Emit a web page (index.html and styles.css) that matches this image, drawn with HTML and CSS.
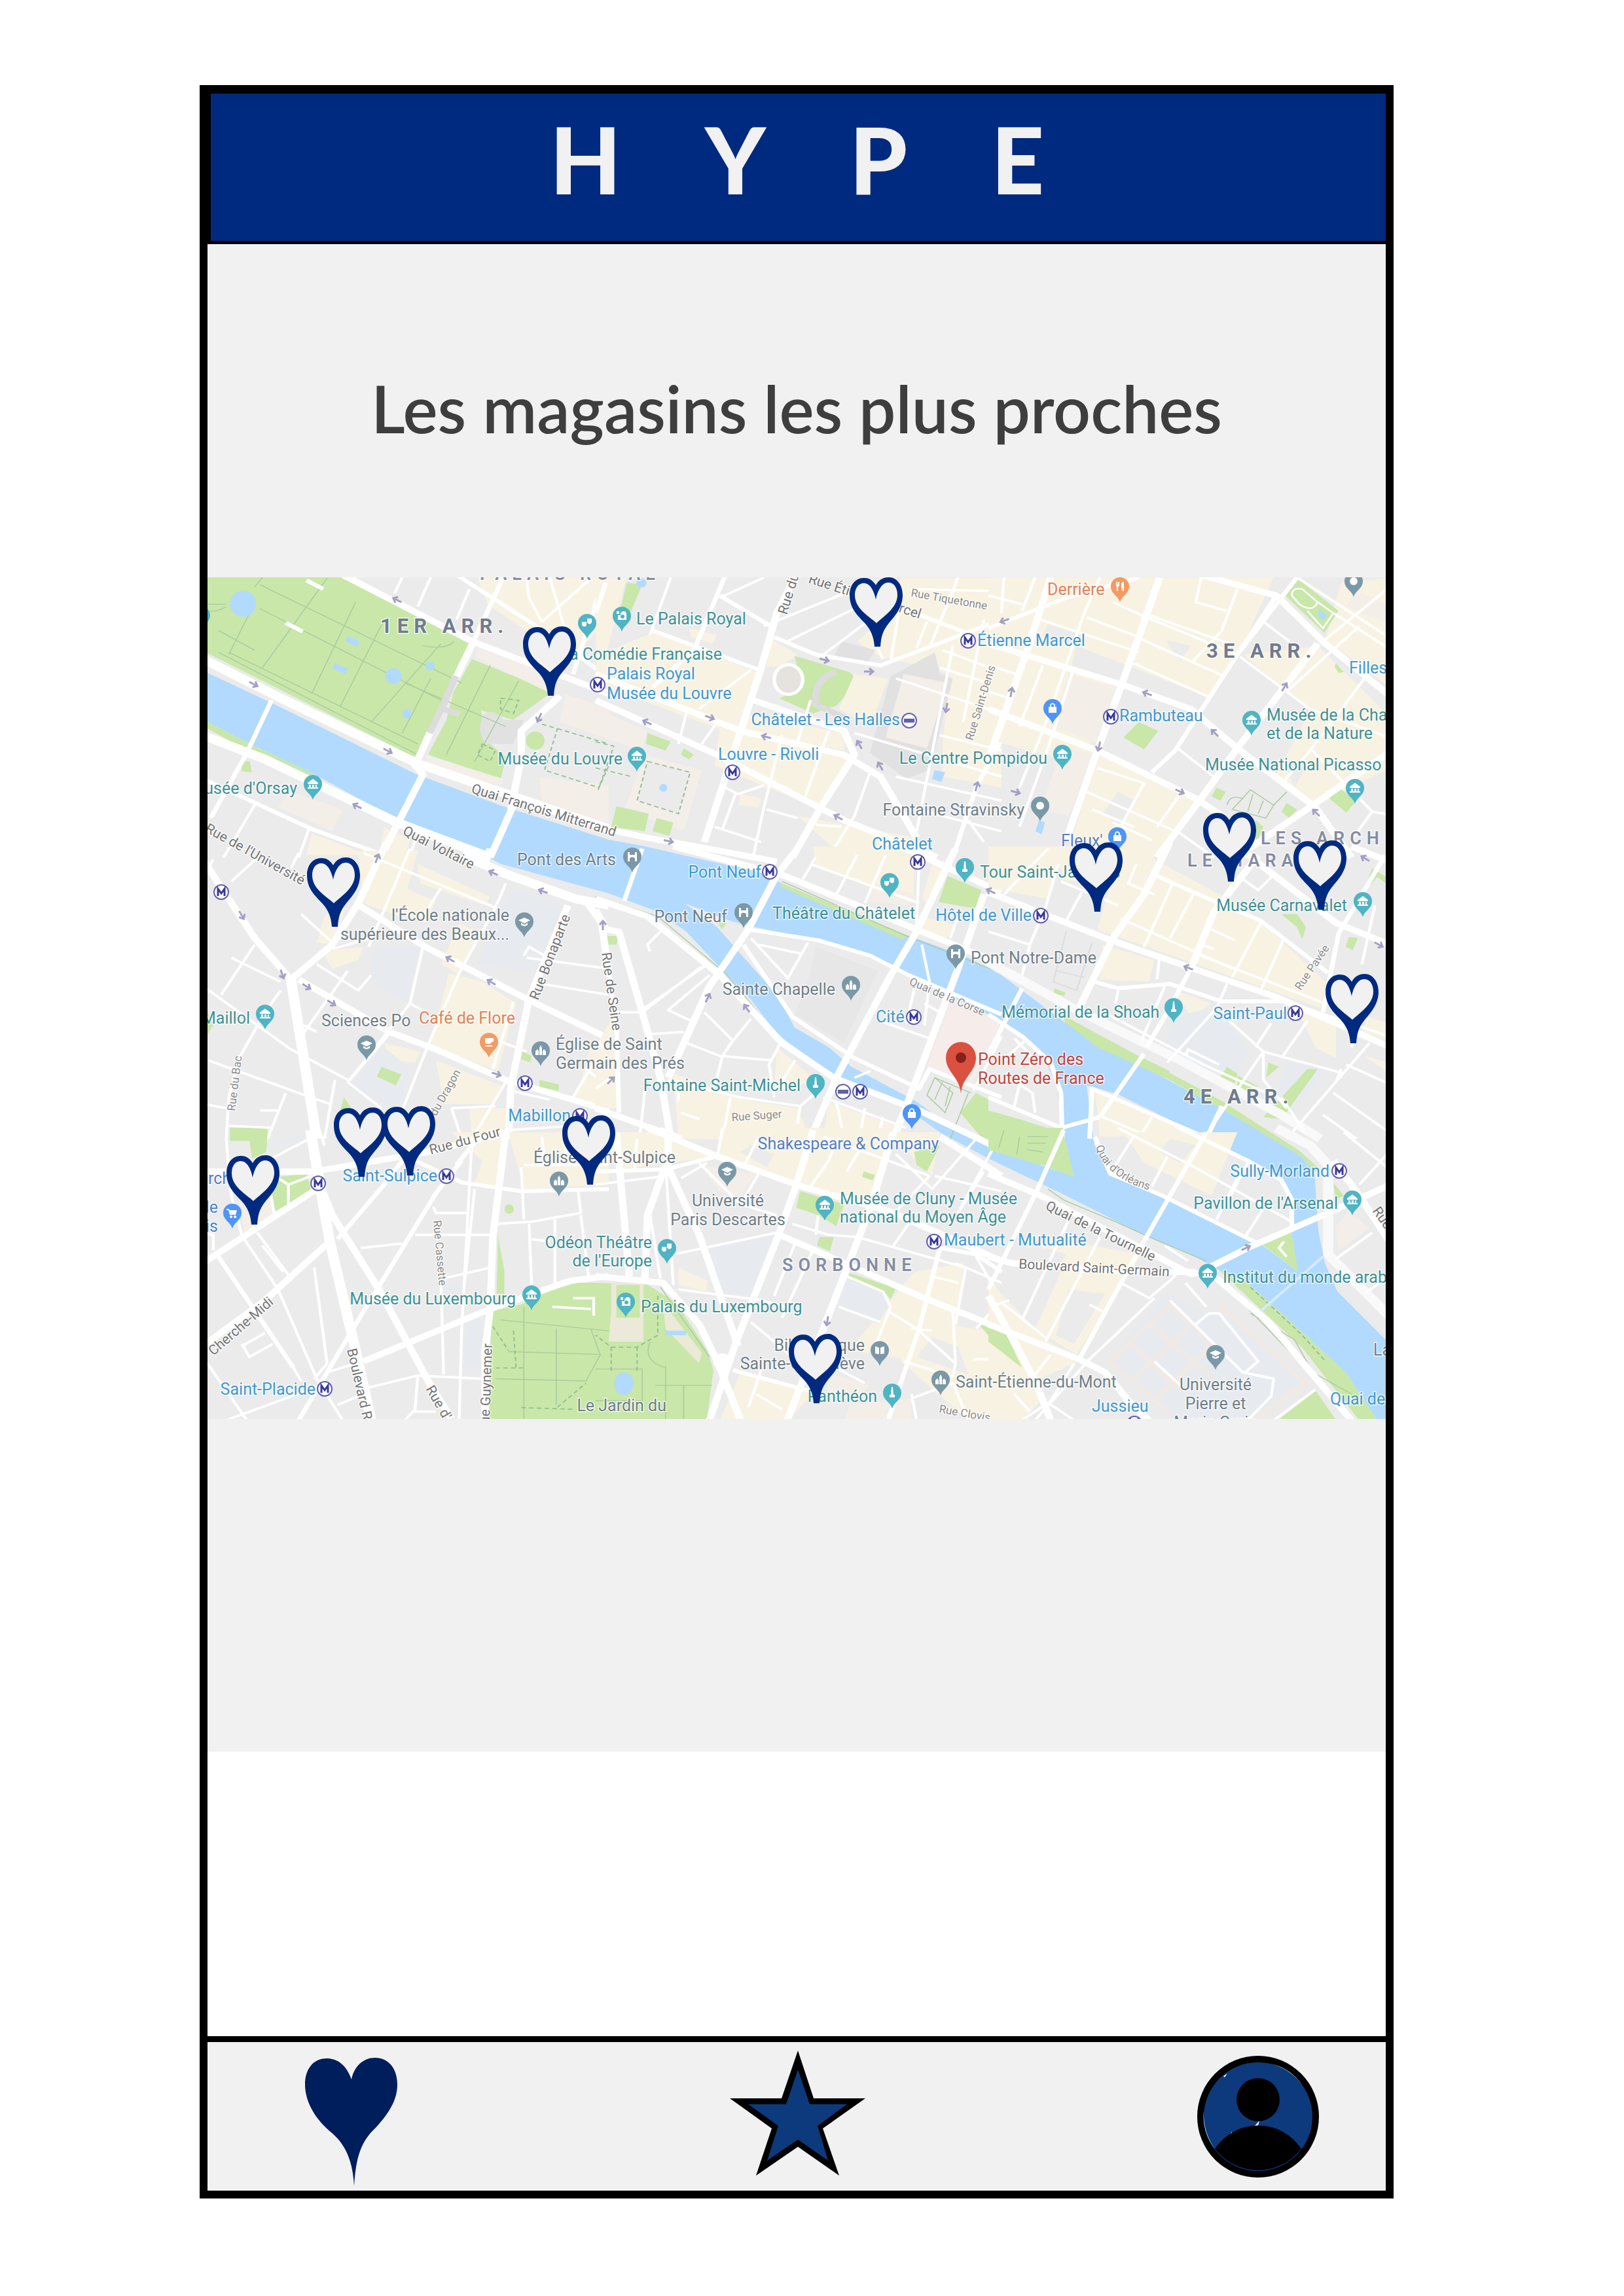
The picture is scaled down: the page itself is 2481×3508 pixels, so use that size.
FILE: index.html
```html
<!DOCTYPE html>
<html lang="fr">
<head>
<meta charset="utf-8">
<meta name="viewport" content="width=device-width, initial-scale=1">
<title>Hype</title>
<link rel="stylesheet" href="styles.css">
</head>
<body>
<div class="phone">
<header class="topbar"><h1 class="brand">HYPE</h1></header>
<main class="content">
<section class="shops">
<h2 class="shops-title">Les magasins les plus proches</h2>
<svg class="map" viewBox="317 882 1800 1286" role="img" aria-label="Plan de Paris">
<defs>
<path id="pin" d="M0 24C-3 14-14 11-14 0A14 14 0 0 1 14 0C14 11 3 14 0 24Z"/>
<g id="museum" class="glyph"><path d="M-8-2L0-8L8-2V0H-8ZM-6 1H-3V5H-6ZM-1 1H2V5H-1ZM4 1H6V5H4ZM-8 5H8V7H-8Z"/></g>
<g id="masks" class="glyph"><path d="M-8-2H-1V3Q-4 8-8 3ZM0-7H7V-1Q4 4 0-1Z"/></g>
<g id="camera" class="glyph"><path d="M-8-7H-4V-3H-8ZM-2-4L1-7H5L7-4V6H-6V-1H-2Z"/><circle class="hole" cx="1" cy="1" r="3"/></g>
<g id="bridge" class="glyph"><path d="M-7-7H-4V-3H4V-7H7V7H4V2Q0-1-4 2V7H-7Z"/></g>
<g id="bag" class="glyph"><path d="M-6-2H6V7H-6ZM-4-2V-5Q0-11 4-5V-2H2V-5Q0-7-2-5V-2Z"/></g>
<g id="cap" class="glyph"><path d="M-9-2L0-6L9-2L0 3ZM-5 2L0 5L5 2V5Q0 9-5 5Z"/></g>
<g id="church" class="glyph"><path d="M-8 7V1L-5-2L-3 1V7ZM-2 7V-4L0-8L2-4V7ZM3 7V1L5-2L8 1V7Z"/></g>
<g id="tower" class="glyph"><path d="M-1-9H1L2 3H4V7H-4V3H-2Z"/></g>
<g id="fork" class="glyph"><path d="M-6-7H-4V-3H-3V-7H-1V-1L-3 1V7H-5V1L-6-1ZM2 7V-4Q3-8 6-7V7H4V1Z"/></g>
<g id="cup" class="glyph"><path d="M-6-6H7V0H4Q3 3 0 3H-3Q-6 3-6 0ZM-6 5H5V7H-6Z"/></g>
<g id="book" class="glyph"><path d="M-7-6L-1-4V6L-7 5ZM7-6L1-4V6L7 5Z"/></g>
<g id="metro"><circle class="badge" r="11"/><path class="badge-m" d="M-5 6V-5L0 2L5-5V6"/></g>
<g id="rer"><circle class="badge" r="11"/><path class="badge-r" d="M-8 0H8"/></g>
<path id="arrow" class="arrow" d="M-7 0H7M1-5L7 0L1 5"/>
<g id="shop">
<path class="shop-edge" d="M40 12C35 4 29 1 22 1C8 1 0 13 0 27C0 48 12 58 24 71C33 81 37 92 38 106H47C48 92 50 82 60 70C70 58 81 46 81 27C81 12 72 0 60 0C52 0 45 3 40 12Z"/>
<path class="shop-fill" d="M40 34C37 20 31 9 22 9C13 9 8 17 8 27C8 48 28 58 41 70C54 58 73 46 73 27C73 15 67 8 59 8C50 8 43 19 40 34Z"/>
</g>
<path id="orleans" d="M1674 1752Q1690 1802 1762 1820"/>
</defs>

<rect class="land" x="317" y="882" width="1800" height="1286"/>
<path class="water" d="M317 1028L413 1073L636 1183L769 1232L930 1283L985 1293L1072 1313L1163 1333L1195 1350L1266 1380L1384 1428L1479 1463L1530 1490L1561 1513L1628 1563L1747 1630L1865 1693L1944 1740L1988 1767L2008 1790L2014 1880L2024 1930L2043 1973L2117 2047V2168H2103L2056 2097L1976 2023L1909 1963L1862 1940L1826 1920L1747 1887L1629 1827L1510 1770L1436 1730L1377 1688L1286 1648L1266 1637L1187 1580L1147 1527L1108 1487L1048 1423L1005 1393L930 1365L765 1320L741 1307L622 1257L603 1250L480 1183L389 1140L317 1103Z"/>
<path class="land" d="M1046 1380L1116 1407L1147 1415L1250 1437L1329 1460L1384 1490L1464 1527L1530 1560L1569 1587L1597 1620L1615 1660L1623 1727L1640 1797L1589 1780L1510 1750L1464 1730L1400 1683L1301 1630L1266 1600L1214 1570L1187 1520L1131 1457L1096 1417Z"/>
<path class="land" d="M1660 1658L1708 1672L1826 1730L1905 1770L1957 1803L1973 1830V1883L1983 1943L1925 1900L1787 1830L1700 1793L1672 1750Z"/>
<g class="park">
<path d="M317 882H524L721 977L690 1060L634 1157L317 998Z"/>
<path d="M721 1007L844 1057L784 1100L735 1085L741 1130L773 1157L765 1190L654 1153L682 1100L693 1057Z"/>
<path d="M751 2003L796 1993L844 1970L883 1960H910L989 1963L1033 1990L1080 2063L1090 2093L1080 2168H747Z"/>
<path d="M1214 1002L1298 1027L1311 1040L1278 1078L1242 1090L1191 1067L1226 1050Z"/>
<path d="M1467 1700L1491 1670L1617 1730L1629 1747L1640 1797L1510 1750Z"/>
<path d="M1862 1940L1909 1963L1976 2023L2056 2097L2103 2168H2075L1990 2060L1915 1990Z"/>
<path d="M317 1103L389 1140L480 1183L475 1188L380 1148L317 1113Z"/>
<path d="M1195 1350L1384 1428L1380 1436L1190 1354ZM1628 1563L1865 1693L1988 1767L2008 1790L2020 1790L1985 1758L1868 1683L1622 1550Z"/>
<path d="M1929 1902L1973 1883L1983 1943Z"/>
<path d="M1955 2168L2010 2125L2040 2168Z"/>
</g>
<path class="hospital" d="M1450 1535L1530 1562L1480 1665L1415 1632Z"/>

<g class="t-nw">
<path class="cream" d="M1060 37H1568V220L1420 420L1100 160ZM420 1210L640 1310H400ZM700 1180L800 1240L780 1320H680Z"/>
<path class="beige" d="M1060 360L1380 500L1330 560L1050 400ZM1400 570L1568 640V780L1380 700ZM860 850L1160 960L1150 990L870 900ZM1300 950L1568 990V1180L1310 1060ZM340 1020L540 1100L500 1200L290 1090Z"/>
<path class="court" d="M1090 660Q1130 640 1160 690H1240L1200 800H1090Q1050 720 1090 660Z"/>
<g class="park"><ellipse cx="1284" cy="785" rx="36" ry="42"/><path d="M150 880H180L190 930L150 925Z"/></g>
<g class="path"><path d="M230 37L200 80M60 280L200 370M220 180L920 600M220 70L1000 520M480 40L230 450M590 150L420 570M700 230L530 630M920 340L650 700M850 350Q940 370 970 330M180 200L100 390M100 380L830 800M60 380L830 850M770 750L880 500M1110 440L940 850M1220 510L1050 880M780 520L1170 720M0 160H90M0 190Q50 200 90 170"/></g>
<g class="path dash"><path d="M1150 590L1220 600L1200 660L1150 640ZM1080 800L1130 830L1110 880L1060 850ZM1310 710L1370 730L1320 920L1530 1000L1568 900M1370 730L1568 800"/></g>
<g class="water"><ellipse cx="155" cy="157" rx="50" ry="60"/><ellipse cx="736" cy="488" rx="31" ry="36"/><ellipse cx="878" cy="443" rx="17" ry="20"/><ellipse cx="788" cy="661" rx="17" ry="23"/><path d="M560 305L608 330L598 355L550 330ZM510 430L560 455L550 478L500 455Z"/></g>
<path class="road r40" d="M0 410L300 590L830 890L1568 1190M0 760L240 870L750 1160L1110 1320"/>
<path class="road r28" d="M540 25L1040 330L1568 570M1050 320L980 490M880 740L820 900L850 940L690 1310M1200 1080L1110 1320M1380 580L1230 740V860L1190 1100"/>
<path class="court-line" d="M975 490Q940 600 875 750M930 640L990 665"/>
<path class="road r16" d="M980 25L1380 330L1568 500M1160 37L1050 320M1550 37L1430 480M265 600L170 840M170 840L30 1140M0 960L420 1190L700 1310M400 50L465 90M320 245L385 285"/>
<path class="road r10" d="M770 37L740 110M880 37L830 170M1030 90L980 230M1250 37L1260 130L1310 240M1340 37L1400 280M1310 240L1500 40M200 1080L80 1320M410 1190L370 1320M820 1240L800 1320"/>
</g>
<g class="t-n">
<path class="cream" d="M0 37H120L0 560ZM220 290L620 470L540 760L0 520V400ZM680 320L780 390L720 440L660 450ZM480 730L1000 860L850 1090L460 900ZM560 660L960 750L960 830L580 740ZM1180 40H1568V1000L1340 950V800L1370 480L1110 400ZM1000 480L1130 500L1060 720L940 640ZM780 1130L1240 1230L1320 1320H960ZM560 1030L640 1050L630 1090L550 1080ZM360 270L470 300L450 340L370 310Z"/>
<path class="cream" d="M1010 330L1110 410L1230 380L1280 120L1160 170Z"/>
<path class="court" d="M1140 490L1310 380L1330 480L1380 500L1290 920L1200 960L1060 840Z"/>
<path class="beige" d="M1190 480L1360 520L1280 820L1120 770ZM0 640L200 740L180 830L0 760ZM190 850L410 920L340 1200L110 1100Z"/>
<path class="land" d="M200 880L365 930L320 1120L160 1060Z"/>
<path class="court" d="M950 330L1080 370L1050 430L920 400Z"/>
<g class="park"><path d="M120 60L180 70L130 210H90ZM200 750L290 790L270 830L195 800ZM340 820L380 850L360 870L330 850ZM80 1085L205 1120L190 1200L60 1180ZM235 1140L300 1160L285 1220L220 1200Z"/></g>
<path class="path dash" d="M0 790L70 810L10 1010M200 880L365 930L320 1120L160 1060ZM0 910L140 950"/>
<g class="water"><circle cx="177" cy="62" r="20"/><ellipse cx="261" cy="1001" rx="15" ry="18"/><path d="M1310 920L1350 930L1335 975L1300 960Z"/></g>
<path class="court-line" d="M930 470Q840 500 850 620L980 690"/>
<path class="road r28" d="M770 37L700 200L640 450L420 1250M0 600L470 850L960 1150L1320 1320M0 480L560 740L960 850L1100 950L1240 1230M610 600L960 740L1000 850L870 1090L760 1320M0 1180L200 1230L480 1290L700 1340"/>
<path class="road r16" d="M500 30L380 370L220 540M690 310L850 390L1100 440L1568 230M1568 780L1470 1000L1380 1320M1170 170L1430 290M40 60L0 200M480 120L690 270M220 280L630 460"/>
<path class="road r10" d="M290 37L210 300M480 130L650 37M650 260L960 110M740 330L1000 180M880 390L1060 230M1080 340L1110 410M1160 500L1568 660M1000 750L1568 950M1380 350L1290 900L1240 1200M350 660L320 800M470 700L410 800M600 460L400 640M720 760L650 1090L610 1310M830 600L780 790M900 740L810 1040M1060 930L1000 1130L900 1320M460 1180L640 1250M660 1100L780 1140M500 1000L550 1030L650 990M540 1030L490 1190M1340 370L1568 470M1330 450L1568 540M1180 130L1140 420M1280 240L1240 360M1568 100L1220 90M1400 37L1290 360M1500 230L1420 700M850 1170L950 1180M1160 950L1568 1060M1330 760L1568 830M1240 1100L1568 1200M1440 1150L1500 1250"/>
<ellipse class="plaza" cx="745" cy="505" rx="55" ry="68"/>
</g>
<g class="t-ne">
<path class="cream" d="M0 37H1100L960 400L860 590L500 520L380 830L0 640ZM980 390L1270 350L1568 700V900L1240 1090L1100 960L1240 650ZM430 840L800 1060L640 1320H300L400 940ZM1360 60L1568 37V560L1300 320ZM0 640L400 830L380 900L0 780Z"/>
<path class="land" d="M340 350L860 590L780 640L500 530L320 440ZM900 480L1060 540L980 640ZM680 320L780 350L740 420ZM230 250L360 300L340 360L210 300ZM1140 880L1230 900L1180 1000ZM500 1020L570 1060L510 1180L440 1120ZM830 850L950 840L1100 1000L980 1200L830 1040Z"/>
<path class="beige" d="M310 480L490 540L430 800L240 720ZM290 800L400 850L310 1130L200 1100ZM1420 100L1568 180V260L1380 170Z"/>
<g class="park"><path d="M1190 40L1350 190L1295 290L1145 120ZM580 700L655 740L600 825L520 770ZM880 1000L915 1020L895 1060L860 1040ZM1150 1070L1190 1100L1160 1140L1130 1110ZM1350 1000L1420 1060L1380 1115L1315 1050ZM1340 430L1370 470L1350 475L1335 445ZM1030 1150L1060 1180L1040 1240L1010 1220Z"/></g>
<path class="path" d="M920 1080Q930 1030 980 1050L1010 1010L1100 1080L1150 1020M980 1050L940 1100L1070 1140L1100 1080M1020 1030L1000 1110M1060 1060L1040 1120"/>
<g class="water"><path d="M1275 180L1305 210L1290 235L1272 215ZM195 1150L218 1160L205 1215L182 1200Z"/></g>
<path class="road r6" d="M1170 120Q1170 80 1210 90L1270 150Q1250 200 1200 160ZM1230 190L1290 270L1330 200L1270 150"/>
<path class="road r28" d="M240 37L150 370L0 870M660 37L580 310L510 540L420 830L300 1240M820 25L1110 120L1290 330L1568 600M0 340L520 530L780 640L960 820L1260 1090L1400 1320M0 640L420 830L800 1050L900 1130M1270 340L960 820L820 1050L650 1320M1568 820L1240 1090L980 1300"/>
<path class="road r16" d="M0 270L300 130L580 37M1190 37L960 390L720 830L630 930M1110 120L960 390"/>
<path class="road r10" d="M430 37L370 200L210 740L120 1000M380 220L580 310M480 150L590 210L960 390M620 210L930 340M590 320L910 490M560 430L860 590M960 90L900 280L790 420M200 230L580 380M60 37L50 200M180 37L130 190M820 37L800 150L920 190M1050 230L1160 330M970 400L1240 640L1568 780M1430 260L1150 560M1450 500L1240 830L1140 970M730 820L880 960M1240 820L1480 1110L1400 1240M420 910L600 980L500 1200M380 1020L740 1210L870 1320M740 1030L650 1180M480 1160L630 1240M0 440L110 480M210 440L120 720M1330 200L1568 380M1290 330L1568 60M1190 37L1568 330M400 1100L560 1180M330 450L230 820L120 1180M0 120L130 160M0 560L80 590M1480 1110L1568 1130"/>
</g>
<g class="t-w">
<path class="cream" d="M600 0H830L760 300L620 240ZM830 60L1110 210L1090 250L840 150ZM780 170L900 230L860 330L760 280ZM990 330L1080 380L980 560L920 520ZM950 560L1080 600L1210 700L1140 1010L880 890ZM460 460L620 440L600 500L500 540ZM470 300L550 240L520 430L440 420ZM700 880L840 920L820 970L720 960ZM900 960L1160 1080L1120 1160H930ZM1500 900H1568V1180L1440 1130ZM1030 1180H1170V1320H1040Z"/>
<path class="campus" d="M1200 180L1410 260L1300 560L1060 520L1140 270ZM660 440H840L790 690L650 600ZM560 1080L700 900L800 1000L760 1180Z"/>
<g class="park"><path d="M690 990L767 1025L745 1075L672 1035ZM105 1270H250L240 1320H105ZM545 1130L580 1190H530ZM1235 920L1270 940L1265 970L1228 955ZM1300 1050L1375 1070V1100L1300 1080ZM18 740L40 800L18 840Z"/></g>
<path class="road r40" d="M1000 20L1180 110L1440 220L1568 250M340 590L440 1320"/>
<path class="road r28" d="M0 40L200 400L340 590M710 -40L600 240L500 430L340 590M590 240L860 440L1270 690L1568 860M370 590L720 830L880 900L1170 1050L1568 1190M1110 -10L1090 60M1410 250L1260 680L1190 1080L1180 1320M1480 230L1540 330L1568 560"/>
<path class="road r10" d="M620 10L1130 260M800 -10L640 440M920 170L850 300M1170 150L1130 260L990 560L870 890L770 1190M850 440L800 700L560 1060L690 1180M800 700L860 740M0 620L340 910L560 1050M200 430L70 660M110 490L300 600M440 520L600 640L650 570M560 550L380 850M390 800L440 830M300 640L240 740L140 950L100 1130L90 1320M20 960L370 1110L490 1160M510 1050L470 1320M320 1110L250 1320M220 1190H290M100 1260L270 1270M1200 690L1120 1000M1240 480L1260 440L1320 480M1250 490L1568 540M1310 610L1568 660M1140 870L1250 920M960 1180L1130 1170M960 1180L1000 1320M1170 1060L1040 1320M500 450L650 400M0 120L40 40M220 20L110 140M380 290L500 420M1430 1130L1500 990L1568 930M1480 1000L1568 1080M1180 1280L1568 1250M720 840L560 1060M0 1160L90 1180M370 10L340 80M1190 1100L1340 1140"/>
</g>
<g class="t-c">
<path class="cream" d="M840 -20H1230V230L850 70ZM1260 220L1300 60L1350 40L1290 250ZM60 770L100 1180L0 1180V900ZM300 1020L560 1130L480 1320H320ZM520 1130L780 1180L830 1320H500ZM900 1150L1180 1270V1320H880ZM700 900L850 1050L690 1110ZM1260 300L1390 340L1360 400L1270 370Z"/>
<path class="beige" d="M1080 150L1240 200L1210 250L1050 230Z"/>
<path class="palace" d="M850 440L1090 550L960 880L770 750L830 560Z"/>
<g class="park"><path d="M1360 115L1490 180L1470 265L1325 235ZM470 330L505 330L490 360ZM45 390H90L80 430H50Z"/></g>
<path class="path" d="M1310 1040L1280 1120L1350 1200L1380 1110ZM1340 1060L1310 1140M1370 1080L1350 1170M1440 1110L1370 1320M1310 1040L1450 1110M0 210L240 300L500 560L720 870M720 140L1200 390L1568 560"/>
<path class="road r28" d="M300 -20L720 110L1240 360L1568 520M780 -10L700 110L590 360L440 620L280 1040M0 220L200 300L480 570L720 880L920 1040L1250 1190L1568 1370M1390 -10L1240 370L1140 570L930 1040L830 1320M1400 540L1210 1140L1150 1320M1500 200L1400 540M1180 -20L1568 190M0 270L40 360L90 370L180 740L250 1040L290 1320M0 1180L330 1320"/>
<path class="road r16" d="M590 360L860 410L1060 480L1210 570L1568 750M570 430L760 760L1000 950L1250 1090L1290 1000L1568 1130M30 380L80 800L90 1200M180 -10L110 230"/>
<path class="road r10" d="M600 400L740 580M630 430L790 470M820 420L740 590M1100 780L1290 860M1290 600L1270 800M1240 590L1200 790M1270 700L1330 740M1260 430L1290 600M180 740L410 530M80 740H180M440 570L280 730L390 790M190 720L420 530M420 740L530 870L490 940L460 1080M350 880L480 940L680 960M600 770L510 900M710 890L670 980L690 1130M770 960L720 1060M280 1050L560 1130L790 1170L780 1250M520 1130L490 1320M790 1170L850 1110M210 840L340 830M250 370L200 430L210 460M930 1150L960 1320M880 1130L1200 1270M830 60L1250 240M850 30L800 130M1010 20L930 200M1120 20L1040 240M1250 30L1240 340M1568 100L1480 260L1430 440M1370 400L1400 300M320 1050V1150M0 870L30 900M170 1320L190 1100M0 1090L60 1040M330 1200L400 1230M1040 1180L1020 1320M1110 1220L1090 1320M1568 850L1460 1100M1000 1040L1060 1010"/>
</g>
<g class="t-e">
<path class="cream" d="M0 -20H300L230 220L0 170ZM520 -40L1000 270L1300 600L1280 720L420 360ZM440 430L640 500L620 600L430 590ZM1180 700L1340 800V950L1260 900ZM410 1090L840 1310H430ZM1450 940L1568 980V1040ZM720 640L860 700L780 760ZM240 -20H640L600 120L300 140ZM1460 760L1568 800V880L1440 830Z"/>
<path class="land" d="M690 -40L880 60L960 100L900 200L700 80ZM20 1130L280 1270V1320H0V1140Z"/>
<path class="campus" d="M720 760L860 720L1010 910L950 1040L660 940ZM1150 960L1300 1000L1180 1200L1100 1150Z"/>
<g class="park"><path d="M0 1190L120 1230L280 1290V1320H0ZM1130 290L1190 290L1225 350L1210 405L1190 350ZM1390 395L1425 400L1405 455L1378 440ZM255 630L298 650L290 665L252 652ZM920 990L960 1020L950 1065L895 1035ZM960 1030L1040 1080L960 1110ZM1080 970L1120 990L1070 1040ZM1230 1000L1270 1000L1130 1230L1060 1220ZM1480 80L1534 120V150L1500 120L1440 200ZM290 780L440 860L700 1010L680 1040L420 900Z"/></g>
<path class="court-line thin" d="M300 370L250 600L340 640L400 420M270 470L390 500M260 550L370 580"/>
<path class="road r40 pale" d="M0 510L340 730L740 960L1130 1210L1280 1320"/>
<path class="road r28" d="M0 190L450 400L790 540L1110 670L1568 910M700 -40L600 200L480 400L350 720M1040 20L870 280L780 540M980 0L1340 330L1568 440M1568 60L1400 -20"/>
<path class="road r16" d="M780 540L690 740L610 900M1530 20L1350 380L1290 740M640 110L850 220L1050 320L1310 560M410 600L500 630L700 610L900 690L1150 690M130 630L0 930M600 930L430 1220M900 1170L840 1320M0 750L130 850L240 970L280 1110L285 1320M0 1130L280 1270L430 1220M390 1320L400 1090L850 1320"/>
<path class="road r10" d="M920 610L880 720L690 970M930 780L1060 920L1370 1020M1060 920V1050L1150 1180M1060 920L830 1320M1090 790L1030 900M1150 690L1568 860M1470 880L1150 1320M1380 980L1568 1080M1290 1210L1420 1320M1330 1110L1568 1310M1050 330L940 580M820 480L1300 700M1140 400L1050 640M710 150L600 440M510 310L940 540M500 640L490 700M460 750L830 980L1110 1130M680 620L590 870M1230 780L1130 950M500 250L280 140M570 60L540 150L640 200M860 360L950 410M820 430L870 450M0 370L160 430L130 570M270 60L220 260L160 430M360 190L300 320M230 -10L60 200M140 870L50 970M100 860L190 970M120 1070L100 1170M120 1070L170 1110L180 1200M440 1220L620 1310M630 1220L580 1320M790 200L700 400M1480 620L1400 900M970 120L1040 180L1100 110M760 940L770 910L890 980M1130 1130L1220 1290M1360 1000L1340 1060M660 480L650 590M1490 250L1440 520"/>
</g>
<g class="t-sw">
<path class="cream" d="M960 0H1170L1140 250L1050 230L1080 130ZM1180 0H1568V240L1240 260Z"/>
<path class="beige" d="M130 260L250 280L275 380L160 460Z"/>
<path class="campus" d="M940 690H1010L1000 760H930ZM1020 860L1080 840V1080H1000ZM260 60L400 0V40Z"/>
<g class="park"><path d="M105 -10H250L245 90L190 120L180 40H105ZM290 205L400 190L420 270L280 360L260 230ZM1140 470L1165 640V740H1135Z"/><ellipse cx="1183" cy="352" rx="18" ry="22"/></g>
<path class="path" d="M1150 860L1568 910M1180 1005L1530 1018M1240 800V1314M1365 900V1250M1130 1130L1480 1140M1500 905L1535 1020L1480 1140"/>
<path class="path dash" d="M1200 910L1210 1080M1120 890L1180 1000M1130 1080L1240 1080M1230 1262L1440 1270M1370 1260L1480 1150"/>
<path class="road r40" d="M415 -10L490 500L590 1000L650 1320"/>
<path class="road r28" d="M0 180H430L870 90L1180 0M0 600L440 260M450 230L500 380L680 720L870 1140L960 1314M620 1050L1110 810L1420 680L1568 660M490 500L240 770L0 980M1170 0L1120 480L1110 810L1090 1000V1320"/>
<path class="road r16" d="M1000 130L900 280L580 900L370 1320M820 130L1000 230L1230 270L1568 260M520 490L700 240L770 130M60 570L350 1080M1060 30L980 150"/>
<path class="road r10" d="M430 620L480 1060L430 1130M350 1080L380 1140M160 490L290 720L440 1130L540 1320M210 460L340 670M230 520L310 640M610 530L770 510M820 470H1110M890 340L900 370H1020M1040 20L1030 240L1000 900L990 1320M1050 260L1010 700M920 700L930 1110M930 670L1110 620M640 1170L830 1115L1080 1130M830 1115L820 1270L780 1320M520 1250L600 1210M150 980L240 920M150 970L180 1030L270 970M0 1030L170 1320M90 1320L480 1150M480 1100L620 1050M250 130L410 30M90 30L110 290L150 470M280 400L260 280M1230 160L1240 400M1130 420L1270 410L1460 370L1450 270M1260 420L1270 700M1360 400V690M1460 380L1490 660M1240 150H1568M1310 20L1320 150M1400 20V150M1270 490L1340 500M0 460L40 470V540M290 210L330 240V350M330 240L420 200M810 1280H900M450 -10L470 60"/>
<path class="road r10" d="M1430 760H1510V840M1350 800L1500 810"/>
</g>
<g class="t-s">
<path class="cream" d="M0 0H280L470 110L100 170ZM500 -20H1130L1090 340L780 230L470 100ZM1130 0H1330L1300 200ZM980 1000L1230 640L1420 600L1400 880L1200 1040ZM560 1100L840 1200L740 1320H480ZM1200 850L1568 920V1320H1440L1180 1050ZM320 620L430 680V730L320 700Z"/>
<path class="land" d="M1300 940L1400 980L1440 1110L1240 1030ZM600 60L690 100L660 160L560 90Z"/>
<path class="beige" d="M400 150L620 190L560 290L480 270ZM920 1110L1060 1160L1000 1230L890 1180ZM980 1250L1220 1220V1320H960Z"/>
<path class="campus" d="M410 540L690 460L610 750L480 740ZM970 670L1110 730L1130 800L1090 880L940 800Z"/>
<g class="park"><path d="M790 270L960 330L930 430L860 380L775 345ZM865 480H920L905 545L855 520ZM980 645L1160 715L1140 765L1110 725L980 660ZM1230 90L1330 60L1280 180L1240 150ZM1035 180L1080 195L1070 220L1030 205ZM1480 880L1568 910V1000Z"/></g>
<path class="sand" d="M60 690H185V960H50L60 820ZM260 780L410 1010L400 1060L270 900Z"/>
<path class="park" d="M80 700H170V850H80Z"/>
<path class="path" d="M0 1085H180V1230H0M230 1160H450M270 1070V1314M250 710L440 1030M210 960Q180 1050 270 1080M340 1160V1314"/>
<path class="path dash" d="M240 750V930L160 985H60L0 930M60 985V1100M160 985V1100"/>
<g class="water"><ellipse cx="109" cy="1152" rx="36" ry="52"/><path d="M270 910H350V930H270Z"/></g>
<path class="road r28" d="M200 -20L470 110L800 250L1130 360L1568 590M840 -10L770 260L710 460L540 970L440 1320M0 660L260 690L400 880L470 1050L560 1320M1150 0L1060 350L880 900L740 1320M1330 20L1568 200M710 470L1270 760L1568 900M270 150L200 380L190 680M80 0L130 660M280 30V160L400 470L550 980"/>
<path class="road r16" d="M530 1090L870 1200M1568 640L1470 560L1330 530L1250 900L1130 1320M0 180L270 170L470 110"/>
<path class="road r10" d="M0 240L270 200M160 30L150 170M270 140L300 700M330 20L250 -20M330 210L430 140M400 140L560 330L700 380M490 -20L470 110M630 20L580 140M640 170L560 330M210 380L250 670M300 560L700 460M320 720L640 770L740 800M770 510L690 750M840 540L720 850M600 870L770 1040M760 420L900 470L1010 480L1430 620L1390 880M1290 200L1140 390M880 20L1290 200M970 180L1020 80M900 130L830 250M940 20L900 130M1160 100L1300 260L1470 30M1310 200L1568 270M1500 180L1400 370M1300 660L1400 690M1390 600L1568 690M1470 570L1568 770L1470 900M970 660L1110 730L1140 800L1080 980M940 800L1100 870M1130 820L1240 900L1390 1060M1220 900L1300 910M1190 1050L1380 1120L1390 1060L1380 820M1220 1200L1240 1320M1220 1220L1380 1150L1440 1320M880 1050L1040 1150M620 1200L720 1270M640 1090L590 1260M860 380L850 470M1220 400L1150 520M1460 1040H1530V1130M1560 20L1400 370"/>
<circle class="road-dot" cx="490" cy="1050" r="36"/>
</g>
<g class="t-se">
<path class="cream" d="M170 470L590 560L340 1020L180 900L280 640ZM0 680L220 950L350 1040L130 1320H0ZM520 0H960L860 290L600 140Z"/>
<path class="land" d="M310 720L450 740L330 970L260 930ZM180 1140L330 1060L560 1260L620 1320H250ZM700 30L800 60L740 140L660 90ZM220 530L300 560L190 780L150 700Z"/>
<path class="campus" d="M680 740L1010 900L1220 1130L1020 1314H700L460 1050Z"/>
<path class="campus-line" d="M700 790L470 1050L700 1290M700 790L900 1020M620 880L860 1120M540 960L760 1200M780 880L560 1130M860 980L640 1230M900 800L1220 1150L1030 1310"/>
<path class="beige" d="M1340 430L1390 360L1470 440L1350 540Z"/>
<g class="park"><path d="M0 -20H290L200 150L0 80ZM290 10L330 205L230 160ZM1060 515L1165 465L1195 640ZM0 890L70 930L130 1080L0 960ZM1330 230L1370 290L1340 310Z"/></g>
<path class="path" d="M120 20L110 100M60 -10L40 70M150 20H230M150 50H220M150 80L210 90M230 260L290 310L490 410L640 490L840 590M930 720L1400 1300M1010 830L1180 950L1250 1100L1400 1200"/>
<path class="path dash" d="M1010 710L1120 830L1210 930L1300 1050"/>
<path class="road r10 faint" d="M1290 570L1030 840"/>
<path class="road r40 pale" d="M1110 -20L1240 60L1310 150L1310 560L1568 870"/>
<path class="road r28" d="M0 190L200 290L780 650L850 640L1080 870L1400 1320M850 620L1000 530L1290 380L1568 230M1330 130L1430 290L1568 540M0 570L90 600L560 640L800 640M0 880L350 1040L450 1100L560 1260L620 1320M0 750L100 960L180 1140L240 1320"/>
<path class="road r16" d="M290 -10L190 260L0 720M840 0L700 290L600 500L350 1040M410 20L470 190L670 290L1040 510M1170 430V310L1130 220L1000 130L720 -30"/>
<path class="road r10" d="M500 -20L780 150L1170 410M690 110L630 250M560 20L490 150M1000 140L930 300M960 210L880 400M1060 350L990 480M510 690L620 760L700 680L750 620M390 790L440 820M430 480L220 960M310 400L130 860M50 780L230 950M30 790L80 770M640 760L390 1040L180 1320M760 690L840 800M700 770L980 1100L1100 1130L1090 1210L1000 1320M800 880L850 830H890L1040 1050L990 1100M640 1050L740 1160M1260 1180L1100 1320M1340 580L1480 460M1450 740L1568 640M1430 240L1568 60M1370 0L1568 190M240 1020L180 1110M330 1060L230 1250M100 1200L160 1280M130 1320L230 1240L330 1320M680 520L770 590M1140 500L1120 530L1150 570"/>
</g>

<g class="arrows">
<use href="#arrow" transform="translate(387 1045) rotate(28)"/><use href="#arrow" transform="translate(592 1147) rotate(28)"/><use href="#arrow" transform="translate(546 1232) rotate(207)"/><use href="#arrow" transform="translate(607 917) rotate(207)"/><use href="#arrow" transform="translate(824 1096) rotate(115)"/>
<use href="#arrow" transform="translate(1084 1096) rotate(20)"/><use href="#arrow" transform="translate(1171 1126) rotate(195)"/><use href="#arrow" transform="translate(989 1104) rotate(205)"/><use href="#arrow" transform="translate(1259 1008) rotate(15)"/><use href="#arrow" transform="translate(1327 1026)"/><use href="#arrow" transform="translate(1313 1138) rotate(240)"/><use href="#arrow" transform="translate(1345 1171) rotate(240)"/><use href="#arrow" transform="translate(1281 1249) rotate(210)"/><use href="#arrow" transform="translate(1021 1285) rotate(12)"/><use href="#arrow" transform="translate(1446 1081) rotate(100)"/><use href="#arrow" transform="translate(1492 1202) rotate(-75)"/>
<use href="#arrow" transform="translate(1535 948) rotate(160)"/><use href="#arrow" transform="translate(1545 1058) rotate(-80)"/><use href="#arrow" transform="translate(1753 1060) rotate(200)"/><use href="#arrow" transform="translate(1856 1120) rotate(225)"/><use href="#arrow" transform="translate(1962 1050) rotate(-60)"/><use href="#arrow" transform="translate(1679 1140) rotate(105)"/><use href="#arrow" transform="translate(1802 1209) rotate(25)"/><use href="#arrow" transform="translate(2011 1242) rotate(225)"/><use href="#arrow" transform="translate(1551 1210) rotate(15)"/>
<use href="#arrow" transform="translate(576 1312) rotate(-70)"/><use href="#arrow" transform="translate(754 1334) rotate(205)"/><use href="#arrow" transform="translate(830 1362) rotate(200)"/><use href="#arrow" transform="translate(369 1398) rotate(60)"/><use href="#arrow" transform="translate(431 1488) rotate(70)"/><use href="#arrow" transform="translate(468 1507) rotate(32)"/><use href="#arrow" transform="translate(506 1532) rotate(32)"/><use href="#arrow" transform="translate(688 1466) rotate(210)"/><use href="#arrow" transform="translate(751 1501) rotate(210)"/><use href="#arrow" transform="translate(758 1641) rotate(18)"/><use href="#arrow" transform="translate(921 1414) rotate(-90)"/><use href="#arrow" transform="translate(1081 1525) rotate(-65)"/><use href="#arrow" transform="translate(1141 1541) rotate(235)"/><use href="#arrow" transform="translate(933 1651) rotate(-45)"/>
<use href="#arrow" transform="translate(1816 1479) rotate(200)"/><use href="#arrow" transform="translate(1514 1362) rotate(205)"/><use href="#arrow" transform="translate(2086 1312) rotate(210)"/><use href="#arrow" transform="translate(2106 1443) rotate(28)"/><use href="#arrow" transform="translate(1903 1907) rotate(-25)"/><use href="#arrow" transform="translate(1264 2018) rotate(100)"/>
</g>

<g class="street">
<text transform="translate(719 1211) rotate(17)">Quai François Mitterrand</text>
<text transform="translate(614 1274) rotate(27)">Quai Voltaire</text>
<text transform="translate(312 1270) rotate(29)">Rue de l'Université</text>
<text transform="translate(1202 940) rotate(-73)">Rue du</text>
<text transform="translate(1234 890) rotate(18)">Rue Étienne Marcel</text>
<text transform="translate(822 1529) rotate(-69)">Rue Bonaparte</text>
<text transform="translate(919 1456) rotate(82)">Rue de Seine</text>
<text transform="translate(658 1764) rotate(-15)">Rue du Four</text>
<text transform="translate(1596 1847) rotate(26)">Quai de la Tournelle</text>
<text transform="translate(1556 1938) rotate(3)">Boulevard Saint-Germain</text>
<text transform="translate(530 2062) rotate(77)">Boulevard R</text>
<text transform="translate(650 2122) rotate(60)">Rue d'A</text>
<text class="end" transform="translate(752 2053) rotate(-88)">ue Guynemer</text>
<text transform="translate(326 2072) rotate(-41)">Cherche-Midi</text>
<text transform="translate(2096 1850) rotate(55)">Rue</text>
</g>
<g class="street small">
<text transform="translate(1391 911) rotate(10)">Rue Tiquetonne</text>
<text transform="translate(1486 1132) rotate(-73)">Rue Saint-Denis</text>
<text transform="translate(1388 1504) rotate(23)">Quai de la Corse</text>
<text transform="translate(1987 1514) rotate(-56)">Rue Pavée</text>
<text transform="translate(359 1698) rotate(-83)">Rue du Bac</text>
<text class="end" transform="translate(704 1638) rotate(-61)">du Dragon</text>
<text transform="translate(1118 1713) rotate(-4)">Rue Suger</text>
<text transform="translate(662 1865) rotate(85)">Rue Cassette</text>
<text transform="translate(1434 2158) rotate(10)">Rue Clovis</text>
<text><textPath href="#orleans">Quai d'Orléans</textPath></text>
</g>

<g class="district">
<text x="733" y="886">PALAIS ROYAL</text>
<text class="big" x="581" y="967">1ER ARR.</text><text class="big" x="1843" y="1005">3E ARR.</text><text class="big" x="1808" y="1686">4E ARR.</text>
<text x="1926" y="1290">LES ARCH</text><text x="1814" y="1324">LE MARA</text><text x="1195" y="1942">SORBONNE</text>
</g>
<g class="label teal">
<text x="972" y="954">Le Palais Royal</text><text class="end" x="1103" y="1008">La Comédie Française</text><text class="end" x="951" y="1168">Musée du Louvre</text><text class="end" x="454" y="1213">usée d'Orsay</text><text class="end" x="1600" y="1167">Le Centre Pompidou</text><text x="1935" y="1101">Musée de la Cha</text><text x="1935" y="1129">et de la Nature</text><text x="1841" y="1177">Musée National Picasso</text><text x="1180" y="1404">Théâtre du Châtelet</text><text x="1497" y="1341">Tour Saint-Jacques</text><text x="1530" y="1555">Mémorial de la Shoah</text><text class="end" x="2058" y="1392">Musée Carnavalet</text><text class="end" x="382" y="1564">Maillol</text><text class="end" x="1223" y="1667">Fontaine Saint-Michel</text><text class="end" x="996" y="1907">Odéon Théâtre</text><text class="end" x="996" y="1935">de l'Europe</text><text class="end" x="788" y="1993">Musée du Luxembourg</text><text x="979" y="2005">Palais du Luxembourg</text><text x="1283" y="1840">Musée de Cluny - Musée</text><text x="1283" y="1868">national du Moyen Âge</text><text x="1868" y="1960">Institut du monde arab</text><text class="end" x="2044" y="1847">Pavillon de l'Arsenal</text><text class="end" x="1340" y="2142">Panthéon</text>
</g>
<g class="label blue">
<text x="927" y="1038">Palais Royal</text><text x="927" y="1068">Musée du Louvre</text><text x="1493" y="987">Étienne Marcel</text><text x="2061" y="1029">Filles</text><text x="1710" y="1102">Rambuteau</text><text class="end" x="1375" y="1108">Châtelet - Les Halles</text><text x="1097" y="1161">Louvre - Rivoli</text><text x="1332" y="1298">Châtelet</text><text class="end" x="1163" y="1341">Pont Neuf</text><text class="end" x="1576" y="1407">Hôtel de Ville</text><text x="1338" y="1562">Cité</text><text class="end" x="1966" y="1557">Saint-Paul</text><text class="end" x="872" y="1713">Mabillon</text><text class="end" x="668" y="1805">Saint-Sulpice</text><text x="1442" y="1903">Maubert - Mutualité</text><text class="end" x="2031" y="1798">Sully-Morland</text><text class="end" x="482" y="2131">Saint-Placide</text><text x="1668" y="2157">Jussieu</text><text x="2032" y="2146">Quai de</text>
</g>
<g class="label shopping">
<text x="1621" y="1293">Fleux'</text><text class="mid" x="1296" y="1756">Shakespeare &amp; Company</text><text x="318" y="1809">rch</text><text class="end" x="333" y="1853">le</text><text class="end" x="333" y="1882">is</text>
</g>
<g class="label grey">
<text class="end" x="1565" y="1246">Fontaine Stravinsky</text><text class="end" x="941" y="1322">Pont des Arts</text><text class="end" x="1111" y="1409">Pont Neuf</text><text x="1483" y="1472">Pont Notre-Dame</text><text class="end" x="1276" y="1520">Sainte Chapelle</text><text class="end" x="778" y="1407">l'École nationale</text><text class="end" x="778" y="1436">supérieure des Beaux...</text><text x="491" y="1568">Sciences Po</text><text x="849" y="1604">Église de Saint</text><text x="849" y="1633">Germain des Prés</text><text class="end" x="1032" y="1777">Église Saint-Sulpice</text><text class="mid" x="1112" y="1843">Université</text><text class="mid" x="1112" y="1872">Paris Descartes</text><text class="end" x="1321" y="2064">Bibliothèque</text><text class="end" x="1321" y="2092">Sainte-Geneviève</text><text x="1460" y="2120">Saint-Étienne-du-Mont</text><text class="mid" x="1857" y="2124">Université</text><text class="mid" x="1857" y="2153">Pierre et</text><text class="mid" x="1857" y="2182">Marie Curie</text><text x="2098" y="2071">La</text><text class="end" x="1018" y="2156">Le Jardin du</text>
</g>
<g class="label orange"><text x="1600" y="909">Derrière</text><text x="640" y="1564">Café de Flore</text></g>
<g class="label red"><text x="1494" y="1627">Point Zéro des</text><text x="1494" y="1656">Routes de France</text></g>

<g class="pin-teal">
<g transform="translate(897 952)"><use href="#pin"/><use href="#masks"/></g><g transform="translate(950 941)"><use href="#pin"/><use href="#camera"/></g><g transform="translate(973 1155)"><use href="#pin"/><use href="#museum"/></g><g transform="translate(478 1198)"><use href="#pin"/><use href="#museum"/></g><g transform="translate(1623 1152)"><use href="#pin"/><use href="#museum"/></g><g transform="translate(1912 1100)"><use href="#pin"/><use href="#museum"/></g><g transform="translate(2070 1204)"><use href="#pin"/><use href="#museum"/></g><g transform="translate(1359 1348)"><use href="#pin"/><use href="#masks"/></g><g transform="translate(1474 1325)"><use href="#pin"/><use href="#tower"/></g><g transform="translate(1793 1539)"><use href="#pin"/><use href="#tower"/></g><g transform="translate(2082 1377)"><use href="#pin"/><use href="#museum"/></g><g transform="translate(405 1549)"><use href="#pin"/><use href="#museum"/></g><g transform="translate(1246 1655)"><use href="#pin"/><use href="#tower"/></g><g transform="translate(1019 1907)"><use href="#pin"/><use href="#masks"/></g><g transform="translate(812 1978)"><use href="#pin"/><use href="#museum"/></g><g transform="translate(956 1989)"><use href="#pin"/><use href="#camera"/></g><g transform="translate(1260 1841)"><use href="#pin"/><use href="#museum"/></g><g transform="translate(1845 1945)"><use href="#pin"/><use href="#museum"/></g><g transform="translate(2066 1833)"><use href="#pin"/><use href="#museum"/></g><g transform="translate(1363 2128)"><use href="#pin"/><use href="#tower"/></g><g transform="translate(307 940)"><use href="#pin"/></g>
</g>
<g class="pin-grey">
<g transform="translate(2068 888)"><use href="#pin"/><circle class="glyph" r="6"/></g><g transform="translate(1589 1231)"><use href="#pin"/><circle class="glyph" r="6"/></g><g transform="translate(966 1309)"><use href="#pin"/><use href="#bridge"/></g><g transform="translate(1136 1394)"><use href="#pin"/><use href="#bridge"/></g><g transform="translate(1460 1457)"><use href="#pin"/><use href="#bridge"/></g><g transform="translate(1300 1505)"><use href="#pin"/><use href="#church"/></g><g transform="translate(801 1408)"><use href="#pin"/><use href="#cap"/></g><g transform="translate(560 1596)"><use href="#pin"/><use href="#cap"/></g><g transform="translate(826 1605)"><use href="#pin"/><use href="#church"/></g><g transform="translate(854 1804)"><use href="#pin"/><use href="#church"/></g><g transform="translate(1111 1789)"><use href="#pin"/><use href="#cap"/></g><g transform="translate(1344 2063)"><use href="#pin"/><use href="#book"/></g><g transform="translate(1437 2108)"><use href="#pin"/><use href="#church"/></g><g transform="translate(1857 2069)"><use href="#pin"/><use href="#cap"/></g>
</g>
<g class="pin-blue">
<g transform="translate(1608 1082)"><use href="#pin"/><use href="#bag"/></g><g transform="translate(1707 1278)"><use href="#pin"/><use href="#bag"/></g><g transform="translate(1393 1701)"><use href="#pin"/><use href="#bag"/></g><g transform="translate(355 1853)"><use href="#pin"/><path class="glyph" d="M-9-6H-5L-4-4H7L5 3H-4L-6-4H-9Z"/><circle class="glyph" cx="-2" cy="6" r="2"/><circle class="glyph" cx="4" cy="6" r="2"/></g>
</g>
<g class="pin-orange"><g transform="translate(1711 896)"><use href="#pin"/><use href="#fork"/></g><g transform="translate(747 1592)"><use href="#pin"/><use href="#cup"/></g></g>
<path class="origin" d="M1468 1671C1466 1645 1445 1638 1445 1616A23 24 0 0 1 1491 1616C1491 1638 1470 1645 1468 1671Z"/><circle class="origin-dot" cx="1468" cy="1616" r="8"/>

<use href="#metro" x="913" y="1046"/><use href="#metro" x="1479" y="979"/><use href="#metro" x="1697" y="1095"/><use href="#rer" x="1389" y="1101"/><use href="#metro" x="1119" y="1180"/><use href="#metro" x="1402" y="1317"/><use href="#metro" x="1176" y="1332"/><use href="#metro" x="1590" y="1399"/><use href="#metro" x="1396" y="1554"/><use href="#metro" x="1979" y="1548"/><use href="#metro" x="338" y="1363"/><use href="#metro" x="802" y="1655"/><use href="#metro" x="886" y="1705"/><use href="#rer" x="1288" y="1668"/><use href="#metro" x="1314" y="1668"/><use href="#metro" x="682" y="1797"/><use href="#metro" x="486" y="1808"/><use href="#metro" x="1427" y="1897"/><use href="#metro" x="2046" y="1789"/><use href="#metro" x="496" y="2122"/><use href="#metro" x="1733" y="2175"/>

<use href="#shop" x="799" y="957"/><use href="#shop" x="1298" y="882"/><use href="#shop" x="1838" y="1241"/><use href="#shop" x="1634" y="1287"/><use href="#shop" x="1976" y="1284"/><use href="#shop" x="469" y="1310"/><use href="#shop" x="2025" y="1488"/><use href="#shop" x="510" y="1692"/><use href="#shop" x="584" y="1690"/><use href="#shop" x="859" y="1704"/><use href="#shop" x="346" y="1765"/><use href="#shop" x="1205" y="2038"/>
</svg>
</section>
</main>
<nav class="tabs" aria-label="Navigation">
<a href="#favoris" aria-label="Favoris"><svg class="tab-icon" width="141" height="207" viewBox="466 3133 141 207"><path class="tab-heart" d="M537 3177C530 3158 518 3145 499 3145C478 3145 466 3162 466 3185C466 3213 484 3240 506 3258C530 3278 539 3305 541 3340C543 3306 548 3280 566 3259C588 3237 607 3213 607 3185C607 3161 594 3144 573 3144C555 3144 541 3157 537 3177Z"/></svg></a>
<a href="#selection" aria-label="Sélection"><svg class="tab-icon" width="207" height="207" viewBox="1116 3133 207 207"><path d="M1220 3133L1244 3206H1323L1258 3252L1283 3324L1220 3280L1156 3324L1180 3252L1116 3206H1195Z"/><path class="tab-blue" d="M1220 3162L1238 3215H1295L1250 3248L1266 3301L1220 3269L1173 3301L1190 3248L1144 3215H1202Z"/></svg></a>
<a href="#profil" aria-label="Profil"><svg class="tab-icon" width="186" height="207" viewBox="-93 -101 186 207"><circle r="93"/><circle class="tab-blue" r="83"/><path class="sliver" d="M20-81A83 83 0 0 1 68-48A92 92 0 0 0 20-81ZM-83-10A83 83 0 0 0-65 51A96 96 0 0 1-83-10ZM-53-62L-47-66L-51-60ZM-6 15L2 6L0 14ZM-43 27L-40 23V27Z"/><circle cy="-26" r="33"/><path d="M-66 49A79 79 0 0 1 66 49A83 83 0 0 1-66 49Z"/></svg></a>
</nav>
</div>
</body>
</html>
```
FILE: styles.css
```css
* { box-sizing: border-box; }
body {
  margin: 0;
  padding: 130px 352px 149px 305px;
  background: #fff;
  font-family: Lato, "Liberation Sans", sans-serif;
}
.phone {
  display: flex;
  flex-direction: column;
  border: 12px solid #000;
  border-top-width: 13px;
}
.topbar {
  display: flex;
  justify-content: center;
  align-items: center;
  min-height: 230px;
  padding-bottom: 26px;
  border-left: 5px solid #000;
  border-bottom: 5px solid #000;
  background: #002a7f;
}
.brand {
  margin: 0;
  padding-left: 124px;
  color: #f1f1f1;
  font-size: 141px;
  font-weight: 900;
  line-height: 170px;
  letter-spacing: 128px;
}
.content { padding-bottom: 435px; }
.shops { padding-bottom: 508px; background: #f1f1f1; }
.shops-title {
  margin: 0;
  padding: 190px 16px 199px;
  color: #3e3e3e;
  font-size: 100px;
  font-weight: 600;
  line-height: 120px;
  text-align: center;
}
.map { display: block; width: 100%; height: auto; font-family: Roboto, "Liberation Sans", sans-serif; }
.tabs {
  display: flex;
  justify-content: space-between;
  align-items: center;
  min-height: 236px;
  padding: 6px 102px 0 149px;
  border-top: 9px solid #000;
  background: #f1f1f1;
}
.tab-icon { display: block; }
.tab-heart { fill: #001d5c; }
.tab-blue { fill: #0d3a7c; }
.sliver { fill: #e8eef8; }

/* Map sheets */
.t-nw { transform: translate(310px, 870px) scale(.3954, .3333); }
.t-n { transform: translate(910px, 870px) scale(.3954, .3333); }
.t-ne { transform: translate(1510px, 870px) scale(.3962, .3333); }
.t-w { transform: translate(310px, 1300px) scale(.3954, .3333); }
.t-c { transform: translate(910px, 1300px) scale(.3954, .3333); }
.t-e { transform: translate(1510px, 1300px) scale(.3962, .3333); }
.t-sw { transform: translate(310px, 1730px) scale(.3954, .3333); }
.t-s { transform: translate(910px, 1730px) scale(.3954, .3333); }
.t-se { transform: translate(1510px, 1730px) scale(.3962, .3333); }

/* Map ground */
.land { fill: #ebebeb; }
.water { fill: #b1dafe; }
.park { fill: #c8e7a9; }
.cream { fill: #f8f2e2; }
.beige { fill: #f3eee8; }
.sand { fill: #ebe9d8; }
.campus { fill: #e7ebef; }
.court { fill: #e1e1e1; }
.palace { fill: #e7e7e7; }
.hospital { fill: #f6ecea; }
.court-line { fill: none; stroke: #dcdcdc; stroke-width: 26; }
.court-line.thin { stroke-width: 5; }
.campus-line { fill: none; stroke: #f1e9e3; stroke-width: 18; }
.path { fill: none; stroke: #abcba0; stroke-width: 4; }
.dash { stroke: #93bd93; stroke-width: 5; stroke-dasharray: 18 12; }
.plaza { fill: #e6e3df; stroke: #fff; stroke-width: 14; }

/* Map roads */
.road { fill: none; stroke: #fff; stroke-linejoin: round; }
.r40 { stroke-width: 40; }
.r28 { stroke-width: 28; }
.r16 { stroke-width: 18; }
.r10 { stroke-width: 11; }
.r6 { stroke-width: 7; }
.pale { stroke: #f9f9f9; }
.faint { stroke: #d6ebfd; }
.road-dot { fill: #fff; }
.arrow { fill: none; stroke: #a3a0c4; stroke-width: 3; }

/* Map labels */
.street text, .label text, .district text { paint-order: stroke; stroke: rgba(255, 255, 255, .7); stroke-width: 3px; }
.street { fill: #757575; font-size: 21px; }
.street.small { fill: #8c8c8c; font-size: 17px; }
.label { font-size: 25px; }
.end { text-anchor: end; }
.mid { text-anchor: middle; }
.teal { fill: #3f9295; }
.blue { fill: #4299cf; }
.shopping { fill: #557fc7; }
.grey { fill: #718089; }
.orange { fill: #e28257; }
.red { fill: #c2453e; }
.district { fill: #858ca3; font-size: 27px; font-weight: 600; letter-spacing: 8px; }
.district .big { fill: #717b8e; font-size: 31px; font-weight: 700; }

/* Map pins */
.glyph { fill: #fff; }
.hole { fill: #4fb4c4; }
.pin-teal { fill: #4fb4c4; }
.pin-grey { fill: #7b98a7; }
.pin-blue { fill: #4f95f7; }
.pin-orange { fill: #f49a62; }
.origin { fill: #da5142; }
.origin-dot { fill: #85211b; }
.badge { fill: #fff; stroke: #6260ae; stroke-width: 2; }
.badge-m { fill: none; stroke: #38389a; stroke-width: 3; }
.badge-r { fill: none; stroke: #6260ae; stroke-width: 6; }
.shop-edge { fill: #002a7f; }
.shop-fill { fill: #f1f1f1; }
```
